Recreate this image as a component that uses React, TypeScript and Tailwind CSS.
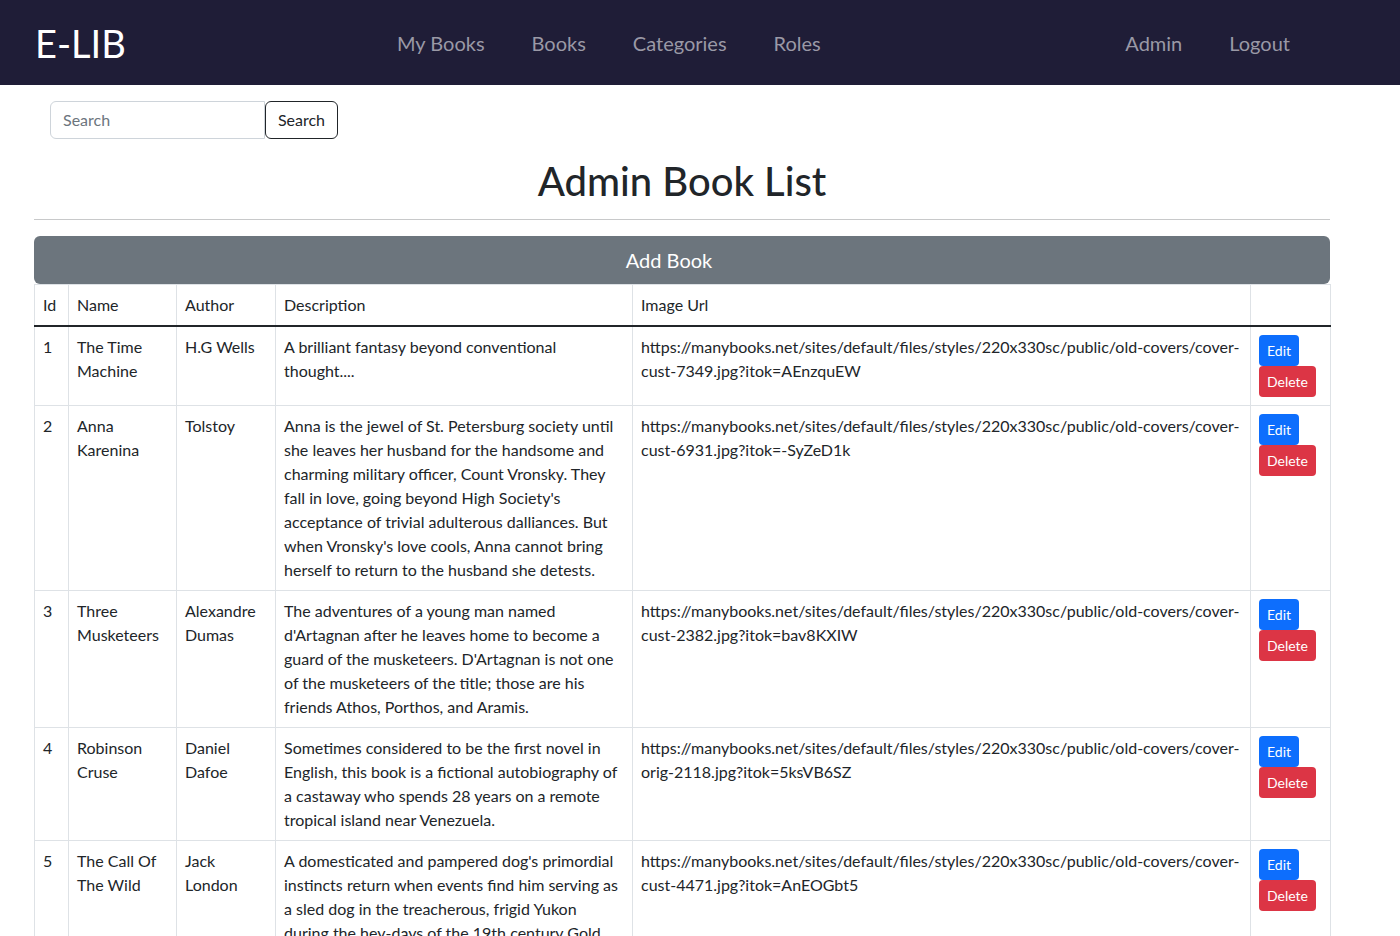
import React from "react";

const FONT = { fontFamily: "Lato, 'Noto Sans', 'Liberation Sans', sans-serif" };

type Book = {
  id: string;
  name: string[];
  author: string[];
  desc: string[];
  url: string[];
};

const books: Book[] = [
  {
    id: "1",
    name: ["The Time", "Machine"],
    author: ["H.G Wells"],
    desc: ["A brilliant fantasy beyond conventional", "thought...."],
    url: [
      "https://manybooks.net/sites/default/files/styles/220x330sc/public/old-covers/cover-",
      "cust-7349.jpg?itok=AEnzquEW",
    ],
  },
  {
    id: "2",
    name: ["Anna", "Karenina"],
    author: ["Tolstoy"],
    desc: [
      "Anna is the jewel of St. Petersburg society until",
      "she leaves her husband for the handsome and",
      "charming military officer, Count Vronsky. They",
      "fall in love, going beyond High Society's",
      "acceptance of trivial adulterous dalliances. But",
      "when Vronsky's love cools, Anna cannot bring",
      "herself to return to the husband she detests.",
    ],
    url: [
      "https://manybooks.net/sites/default/files/styles/220x330sc/public/old-covers/cover-",
      "cust-6931.jpg?itok=-SyZeD1k",
    ],
  },
  {
    id: "3",
    name: ["Three", "Musketeers"],
    author: ["Alexandre", "Dumas"],
    desc: [
      "The adventures of a young man named",
      "d'Artagnan after he leaves home to become a",
      "guard of the musketeers. D'Artagnan is not one",
      "of the musketeers of the title; those are his",
      "friends Athos, Porthos, and Aramis.",
    ],
    url: [
      "https://manybooks.net/sites/default/files/styles/220x330sc/public/old-covers/cover-",
      "cust-2382.jpg?itok=bav8KXIW",
    ],
  },
  {
    id: "4",
    name: ["Robinson", "Cruse"],
    author: ["Daniel", "Dafoe"],
    desc: [
      "Sometimes considered to be the first novel in",
      "English, this book is a fictional autobiography of",
      "a castaway who spends 28 years on a remote",
      "tropical island near Venezuela.",
    ],
    url: [
      "https://manybooks.net/sites/default/files/styles/220x330sc/public/old-covers/cover-",
      "orig-2118.jpg?itok=5ksVB6SZ",
    ],
  },
  {
    id: "5",
    name: ["The Call Of", "The Wild"],
    author: ["Jack", "London"],
    desc: [
      "A domesticated and pampered dog's primordial",
      "instincts return when events find him serving as",
      "a sled dog in the treacherous, frigid Yukon",
      "during the hey-days of the 19th century Gold",
      "Rush.",
    ],
    url: [
      "https://manybooks.net/sites/default/files/styles/220x330sc/public/old-covers/cover-",
      "cust-4471.jpg?itok=AnEOGbt5",
    ],
  },
];

function Lines({ lines }: { lines: string[] }) {
  return (
    <>
      {lines.map((l, i) => (
        <div key={i} className="whitespace-nowrap">
          {l}
        </div>
      ))}
    </>
  );
}

export default function App() {
  return (
    <div className="min-h-[936px] bg-white text-[#212529]" style={FONT}>
      <nav className="flex h-[85px] items-center bg-[#1f1d37]">
        <div className="w-[397px] pl-[35px] text-[38px] leading-[48px] text-white">E-LIB</div>
        <div className="flex gap-[47px] text-[20px] leading-[30px] text-[#9a99a6]">
          <span>My Books</span>
          <span>Books</span>
          <span>Categories</span>
          <span>Roles</span>
        </div>
        <div className="ml-auto flex gap-[47px] pr-[110px] text-[20px] leading-[30px] text-[#9a99a6]">
          <span>Admin</span>
          <span>Logout</span>
        </div>
      </nav>

      <main className="ml-[34px] w-[1296px]">
        <div className="ml-[16px] mt-[16px] flex">
          <div className="flex h-[38px] w-[215px] items-center rounded-l-[6px] border border-[#ced4da] px-[12px] text-[16px] text-[#6c757d]">
            Search
          </div>
          <div className="flex h-[38px] w-[73px] items-center justify-center rounded-[6px] border border-[#212529] text-[16px]">
            Search
          </div>
        </div>

        <h1 className="mt-[18px] h-[48px] text-center text-[40px] font-medium leading-[48px]">
          Admin Book List
        </h1>
        <div className="mt-[14px] h-px bg-[#c8c9ca]" />

        <div className="mt-[16px] flex h-[48px] items-center justify-center rounded-[6px] bg-[#6c757d] pr-[26px] text-[20px] text-white">
          Add Book
        </div>

        <table className="w-[1296px] table-fixed border-collapse text-[16px] leading-[24px]">
          <colgroup>
            <col className="w-[34px]" />
            <col className="w-[108px]" />
            <col className="w-[99px]" />
            <col className="w-[357px]" />
            <col className="w-[618px]" />
            <col className="w-[80px]" />
          </colgroup>
          <thead>
            <tr>
              {["Id", "Name", "Author", "Description", "Image Url", ""].map((h, i) => (
                <th
                  key={i}
                  className="border-x border-t border-b-2 border-x-[#dee2e6] border-t-[#dee2e6] border-b-[#212529] p-[8px] text-left align-top font-normal"
                >
                  {h}
                </th>
              ))}
            </tr>
          </thead>
          <tbody>
            {books.map((b) => (
              <tr key={b.id}>
                <td className="border border-[#dee2e6] p-[8px] align-top">{b.id}</td>
                <td className="border border-[#dee2e6] p-[8px] align-top">
                  <Lines lines={b.name} />
                </td>
                <td className="border border-[#dee2e6] p-[8px] align-top">
                  <Lines lines={b.author} />
                </td>
                <td className="border border-[#dee2e6] p-[8px] align-top">
                  <Lines lines={b.desc} />
                </td>
                <td className="border border-[#dee2e6] p-[8px] align-top">
                  <Lines lines={b.url} />
                </td>
                <td className="border border-[#dee2e6] p-[8px] align-top">
                  <div className="flex flex-col items-start">
                    <div className="flex h-[31px] items-center rounded-[4px] bg-[#0d6efd] px-[8px] text-[14px] text-white">
                      Edit
                    </div>
                    <div className="flex h-[31px] items-center rounded-[4px] bg-[#dc3545] px-[8px] text-[14px] text-white">
                      Delete
                    </div>
                  </div>
                </td>
              </tr>
            ))}
          </tbody>
        </table>
      </main>
    </div>
  );
}
